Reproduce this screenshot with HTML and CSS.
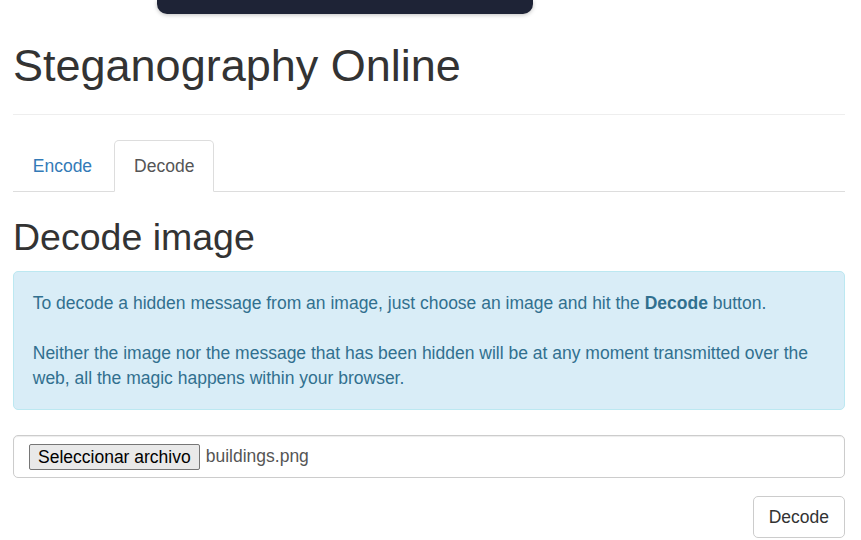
FILE: index.html
```html
<!DOCTYPE html>
<html lang="en">
<head>
<meta charset="utf-8">
<title>Steganography Online</title>
<link rel="stylesheet" href="styles.css">
</head>
<body>
<div class="topbar"></div>
<div class="container">
  <div class="page-header">
    <h1>Steganography Online</h1>
  </div>
  <ul class="nav-tabs">
    <li><a href="#">Encode</a></li>
    <li class="active"><a href="#">Decode</a></li>
  </ul>
  <h2>Decode image</h2>
  <div class="alert">
    To decode a hidden message from an image, just choose an image and hit the <b>Decode</b> button.<br><br>Neither the image nor the message that has been hidden will be at any moment transmitted over the web, all the magic happens within your browser.
  </div>
  <div class="form-group">
    <div class="form-control">
      <span class="file-btn">Seleccionar archivo</span>
      <span class="file-name">buildings.png</span>
    </div>
  </div>
  <div class="actions">
    <button class="btn">Decode</button>
  </div>
</div>
</body>
</html>
```
FILE: styles.css
```css
* { box-sizing: border-box; }
html, body { margin: 0; padding: 0; }
body {
  font-family: "Liberation Sans", Arial, sans-serif;
  font-size: 17.5px;
  line-height: 25px;
  color: #333;
  background: #fff;
  overflow: hidden;
}
.topbar {
  position: absolute;
  top: 0;
  left: 157px;
  width: 376px;
  height: 14px;
  background: #1e2336;
  border-radius: 0 0 10px 10px;
  box-shadow: 0 1px 4px rgba(0,0,0,0.25);
}
.container {
  padding: 41px 16px 0 13px;
}
.page-header {
  padding-bottom: 11.25px;
  margin-bottom: 25px;
  border-bottom: 1px solid #eee;
}
h1 {
  margin: 0 0 12px;
  font-size: 45px;
  font-weight: 500;
  line-height: 49.5px;
}
.nav-tabs {
  list-style: none;
  margin: 0;
  padding: 0;
  display: flex;
  border-bottom: 1px solid #ddd;
}
.nav-tabs li {
  margin-right: 2.5px;
  margin-bottom: -1px;
}
.nav-tabs a {
  display: block;
  padding: 13px 18.75px 12px;
  line-height: 25px;
  border: 1px solid transparent;
  border-radius: 5px 5px 0 0;
  color: #337ab7;
  text-decoration: none;
}
.nav-tabs .active a {
  color: #555;
  background: #fff;
  border-color: #ddd #ddd transparent;
}
h2 {
  margin: 25px 0 12.5px;
  font-size: 37.5px;
  font-weight: 500;
  line-height: 41.25px;
}
.alert {
  padding: 19.5px 18.75px 18px;
  margin-bottom: 25px;
  border: 1px solid #bce8f1;
  border-radius: 5px;
  background: #d9edf7;
  color: #31708f;
}
.form-group {
  margin-bottom: 18.75px;
}
.form-control {
  height: 42.5px;
  padding: 8px 15px 7px;
  border: 1px solid #ccc;
  border-radius: 5px;
  color: #555;
  display: flex;
  align-items: center;
  box-shadow: inset 0 1px 1px rgba(0,0,0,0.075);
}
.file-btn {
  display: inline-block;
  height: 26px;
  line-height: 25px;
  padding: 0 8px;
  margin-right: 6px;
  border: 1px solid #767676;
  border-radius: 2px;
  background: #e9e9e9;
  color: #000;
  white-space: nowrap;
}
.file-name {
  color: #555;
}
.actions {
  display: flex;
  justify-content: flex-end;
}
.btn {
  font: inherit;
  line-height: 25px;
  padding: 8px 15px 7px;
  border: 1px solid #ccc;
  border-radius: 5px;
  background: #fff;
  color: #333;
}
```
